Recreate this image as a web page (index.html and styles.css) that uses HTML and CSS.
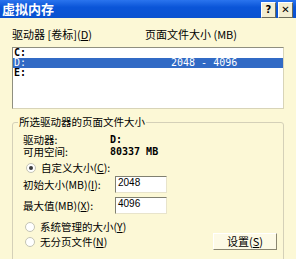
FILE: index.html
```html
<!DOCTYPE html>
<html lang="zh-CN">
<head>
    <meta charset="UTF-8">
    <title>虚拟内存</title>
    <link rel="stylesheet" href="styles.css">
</head>
<body>
    <div class="window">
        <div class="titlebar">
            <span class="title">虚拟内存</span>
            <div class="caption-buttons">
                <span class="cap-btn">?</span>
                <span class="cap-btn">&#x2715;</span>
            </div>
        </div>
        <div class="content">
            <div class="list-headers">
                <span>驱动器 [卷标](<u>D</u>)</span>
                <span>页面文件大小 (MB)</span>
            </div>
            <div class="listbox">
                <div class="list-row"><span class="drive">C:</span><span></span></div>
                <div class="list-row selected"><span class="drive">D:</span><span>2048 - 4096</span></div>
                <div class="list-row"><span class="drive">E:</span><span></span></div>
            </div>
            <fieldset class="group">
                <legend>所选驱动器的页面文件大小</legend>
                <div class="info">
                    <span>驱动器:</span><span class="mono">D:</span>
                    <span>可用空间:</span><span class="mono">80337 MB</span>
                </div>
                <label class="radio-row first"><span class="radio checked"></span><span>自定义大小(<u>C</u>):</span></label>
                <div class="field-row">
                    <span class="field-label">初始大小(MB)(<u>I</u>):</span>
                    <span class="textbox">2048</span>
                </div>
                <div class="field-row second">
                    <span class="field-label">最大值(MB)(<u>X</u>):</span>
                    <span class="textbox">4096</span>
                </div>
                <div class="bottom">
                    <div class="radios">
                        <label class="radio-row"><span class="radio"></span><span>系统管理的大小(<u>Y</u>)</span></label>
                        <label class="radio-row"><span class="radio"></span><span>无分页文件(<u>N</u>)</span></label>
                    </div>
                    <button class="set-btn">设置(<u>S</u>)</button>
                </div>
            </fieldset>
        </div>
    </div>
</body>
</html>
```

FILE: styles.css
```css
body {
    margin: 0;
    font-family: "Noto Sans CJK SC", "Liberation Sans", sans-serif;
    font-size: 10.5px;
    color: #000000;
    background-color: #fcf8d6;
}
.window {
    width: 296px;
    height: 259px;
    overflow: hidden;
}
.titlebar {
    height: 18px;
    background: linear-gradient(to bottom, #2a74ee, #0a55d8 40%, #0a52d0);
    color: #ffffff;
    display: flex;
    align-items: center;
    justify-content: space-between;
    padding: 0 3px 0 2px;
}
.title {
    font-weight: bold;
    font-size: 13px;
    line-height: 18px;
}
.caption-buttons {
    display: flex;
    gap: 2px;
    margin-top: 1px;
}
.cap-btn {
    width: 13px;
    height: 14px;
    background-color: #f3eed2;
    border: 1px solid #ffffff;
    border-right-color: #6b6b5a;
    border-bottom-color: #6b6b5a;
    color: #000000;
    font-family: "DejaVu Sans", sans-serif;
    font-weight: bold;
    font-size: 10px;
    line-height: 14px;
    text-align: center;
}
.content {
    padding: 0 12px 0 12px;
}
.list-headers {
    display: grid;
    grid-template-columns: 133px 1fr;
    margin-top: 9px;
    height: 14px;
    line-height: 14px;
    font-size: 11px;
}
.listbox {
    margin-top: 6px;
    height: 60px;
    background-color: #ffffff;
    border: 1px solid #8f8f80;
    border-right-color: #d8d4b8;
    border-bottom-color: #d8d4b8;
    font-family: "DejaVu Sans Mono", monospace;
    font-size: 10px;
    font-weight: bold;
}
.list-row {
    display: grid;
    grid-template-columns: 157px 1fr;
    height: 10px;
    line-height: 10px;
    padding-left: 1px;
}
.list-row.selected {
    background-color: #316ac5;
    color: #ffffff;
    font-weight: normal;
}
.group {
    margin: 6px 0 0 0;
    height: 160px;
    padding: 5px 10px 0 10px;
    border: 1px solid #d4d0b8;
    border-radius: 3px;
}
.group legend {
    padding: 0 1px;
    margin-left: -5px;
    line-height: 14px;
}
.info {
    display: grid;
    grid-template-columns: 87px 1fr;
    grid-auto-rows: 12px;
    line-height: 12px;
}
.mono {
    font-family: "DejaVu Sans Mono", monospace;
    font-size: 10px;
    font-weight: bold;
}
.radio-row {
    display: flex;
    align-items: center;
    gap: 5px;
    height: 15px;
    line-height: 15px;
    padding-left: 2px;
}
.radio-row.first {
    margin-top: 2px;
    padding-left: 3px;
}
.radio {
    width: 8px;
    height: 8px;
    border: 1px solid #c4c4b4;
    border-radius: 50%;
    background-color: #ffffff;
    display: flex;
    align-items: center;
    justify-content: center;
}
.radio.checked::after {
    content: "";
    width: 4px;
    height: 4px;
    border-radius: 50%;
    background-color: #3c3c3c;
}
.field-row {
    display: flex;
    align-items: center;
    margin-top: 1px;
    height: 17px;
}
.field-row.second {
    margin-top: 4px;
}
.field-label {
    width: 92px;
}
.textbox {
    width: 48px;
    height: 15px;
    background-color: #ffffff;
    border: 1px solid #808070;
    border-right-color: #e8e4cc;
    border-bottom-color: #e8e4cc;
    font-family: "Liberation Sans", sans-serif;
    font-size: 10px;
    line-height: 12px;
    padding-left: 2px;
}
.bottom {
    display: flex;
    justify-content: space-between;
    align-items: flex-start;
    margin-top: 5px;
}
.set-btn {
    width: 64px;
    height: 17px;
    margin-top: 14px;
    margin-right: -4px;
    background-color: #fdfae6;
    border: 1px solid #ffffff;
    border-right-color: #8a8670;
    border-bottom-color: #8a8670;
    font-family: "Noto Sans CJK SC", sans-serif;
    font-size: 11px;
    line-height: 15px;
    padding: 0;
}
u {
    text-decoration: underline;
}
```
